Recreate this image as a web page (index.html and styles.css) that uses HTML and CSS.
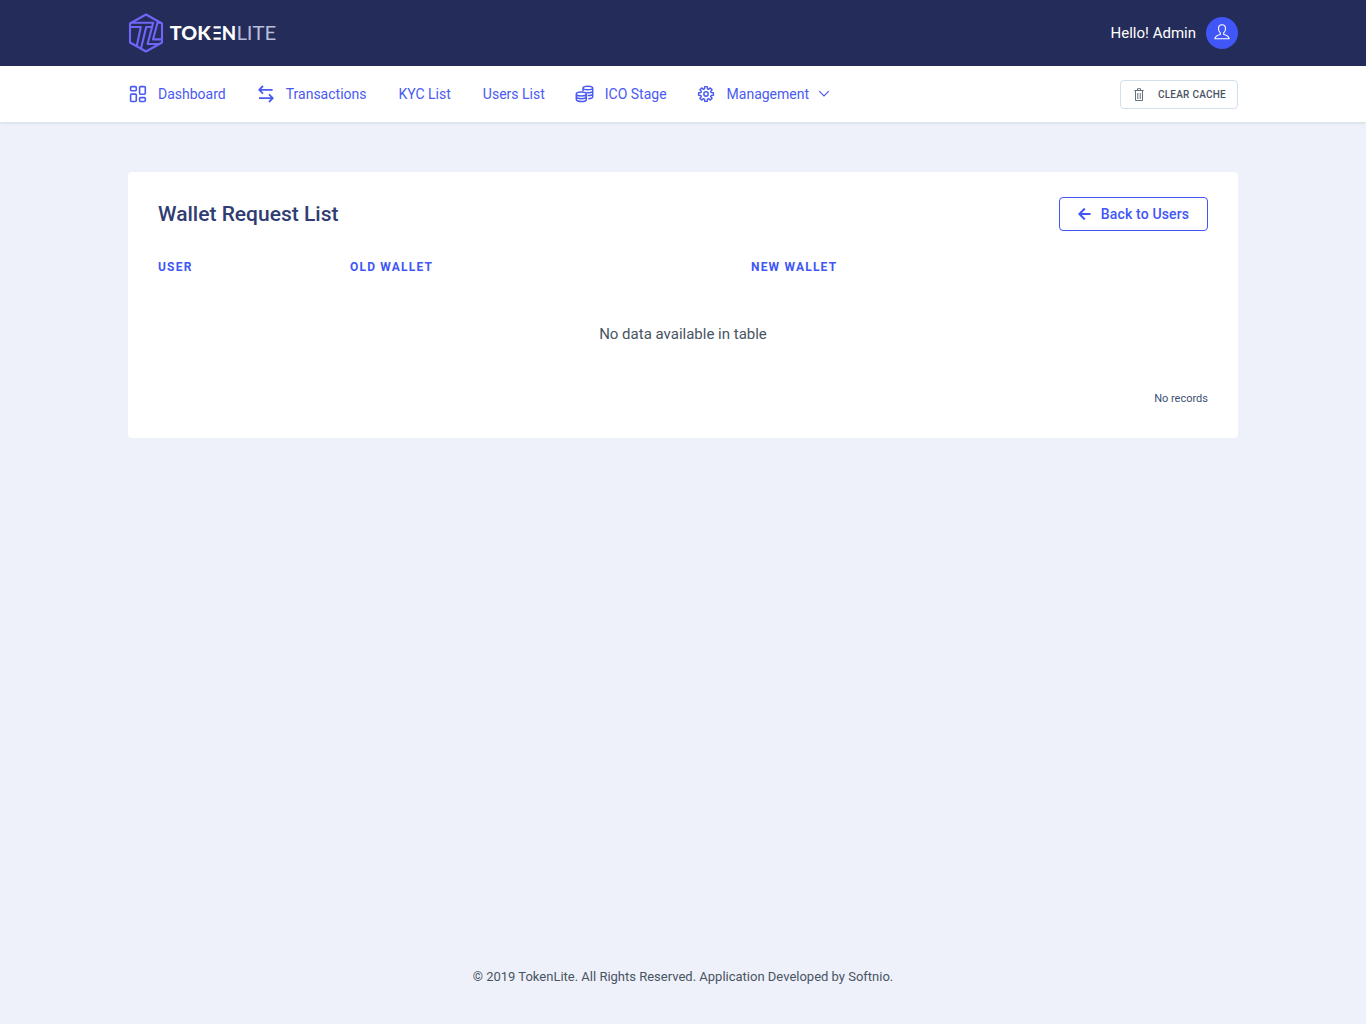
FILE: index.html
```
<!DOCTYPE html>
<html lang="en">
<head>
<meta charset="utf-8">
<title>Wallet Request List | TokenLite</title>
<link rel="stylesheet" href="styles.css">
</head>
<body>
<header class="topbar">
  <div class="container topbar-inner">
    <a class="logo" aria-label="TokenLite">
      <svg width="150" height="42" viewBox="0 0 150 42">
        <g fill="none" stroke="#7065f8" stroke-width="2.1" stroke-linejoin="round" stroke-linecap="round">
          <path d="M18 2.5 34 11.5V30.5L18 39.5 2 30.5V11.5Z"/>
          <path d="M3.5 10.8H25.2L24 15H18.2L13 36.5M3 15H12.8L8.8 33.8M32.5 10.8H29.5L25 27.4H33.2M25.2 10.8 19.6 32H31"/>
        </g>
        <g class="wordmark">
          <text class="bold" x="41.8" y="27.8" textLength="41" lengthAdjust="spacingAndGlyphs">TOK</text>
          <path d="M85.6 15.4h7.2M85.6 21h7.2M85.6 26.6h7.2" stroke="#fff" stroke-width="2.2"/>
          <text class="bold" x="93.8" y="27.8" textLength="14.4" lengthAdjust="spacingAndGlyphs">N</text>
          <text class="light" x="108.4" y="27.8" textLength="40" lengthAdjust="spacingAndGlyphs">LITE</text>
        </g>
      </svg>
    </a>
    <div class="user">
      <span>Hello! Admin</span>
      <span class="avatar">
        <svg width="16" height="16" viewBox="0 0 16 16" fill="none" stroke="#fff" stroke-width="1.1" stroke-linejoin="round"><path d="M6.3 8.7C4.7 7.5 4.4 5.7 4.5 4.3 4.6 1.8 6 .8 8 .8s3.4 1 3.5 3.5c.1 1.4-.2 3.2-1.8 4.4v1.8c2.7.6 5 1.4 5.4 4.2H.9c.4-2.8 2.7-3.6 5.4-4.2Z"/></svg>
      </span>
    </div>
  </div>
</header>
<nav class="navbar">
  <div class="container navbar-inner">
    <ul class="menu">
      <li><svg class="icon" viewBox="0 0 20 20"><rect x="2.6" y="2.6" width="5.7" height="4.1" rx="1"/><rect x="11.6" y="2.6" width="5.7" height="7.7" rx="1"/><rect x="2.6" y="10.1" width="5.7" height="7.4" rx="1"/><rect x="11.6" y="13.6" width="5.7" height="3.9" rx="1"/></svg>Dashboard</li>
      <li><svg class="icon arrows" viewBox="0 0 20 20"><path d="M16.6 5.8H3.5M7 2 3.2 5.8 7 9.6M3 14.2h13.5M13 10.4l3.8 3.8L13 18"/></svg>Transactions</li>
      <li>KYC List</li>
      <li>Users List</li>
      <li><svg class="icon coins" viewBox="0 0 20 20"><path d="M8 7.2V4c0-2.5 9.7-2.5 9.7 0v8.8c0 1-1.7 1.8-4.4 1.9M8 4c0 2.3 9.7 2.3 9.7 0M11.5 8.6c3 .4 6.2-.2 6.2-1.6M12.6 11.6c2.8.1 5.1-.5 5.1-1.7"/><path d="M1.3 10c0-2.6 10-2.6 10 0v5.4c0 2.8-10 2.8-10 0ZM1.3 10c0 2.5 10 2.5 10 0M1.3 12.8c0 2.5 10 2.5 10 0"/></svg>ICO Stage</li>
      <li><svg class="icon gear" viewBox="0 0 20 20"><path d="M8.35 4.3 8.6 1.8h2.8l.25 2.5 1.22.5 1.94-1.58 1.97 1.97-1.58 1.94.5 1.22 2.5.25v2.8l-2.5.25-.5 1.22 1.58 1.94-1.97 1.97-1.94-1.58-1.22.5-.25 2.5H8.6l-.25-2.5-1.22-.5-1.94 1.58-1.97-1.97 1.58-1.94-.5-1.22-2.5-.25V8.6l2.5-.25.5-1.22L3.22 5.19l1.97-1.97L7.13 4.8Z"/><circle cx="10" cy="10" r="2.4"/></svg>Management<svg class="caret" viewBox="0 0 12 8"><path d="M1.2 1.2 6 6l4.8-4.8"/></svg></li>
    </ul>
    <button class="btn-cache"><svg width="10" height="14" viewBox="0 0 10 14" fill="none" stroke="#657080"><path d="M.3 2.5h9.4M3.5 2V.7h3V2M1.5 3v9.5h7V3M3.8 5v6M6.2 5v6"/></svg>CLEAR CACHE</button>
  </div>
</nav>
<main class="container content">
  <section class="card">
    <div class="card-head">
      <h1>Wallet Request List</h1>
      <a class="btn-back"><svg width="13" height="12" viewBox="0 0 13 12"><path d="M12.5 6H1.8M6.8.6 1.4 6l5.4 5.4"/></svg>Back to Users</a>
    </div>
    <table>
      <thead><tr><th class="col-user">USER</th><th class="col-old">OLD WALLET</th><th>NEW WALLET</th></tr></thead>
      <tbody><tr><td colspan="3">No data available in table</td></tr></tbody>
    </table>
    <div class="records">No records</div>
  </section>
</main>
<footer class="footer">© 2019 TokenLite. All Rights Reserved. Application Developed by Softnio.</footer>
</body>
</html>
```

FILE: styles.css
```
* { box-sizing: border-box; }
body {
  margin: 0;
  min-height: 100vh;
  display: flex;
  flex-direction: column;
  background: #eef1f9;
  color: #495463;
  font-family: Roboto, sans-serif;
  font-size: 15px;
}
.container { width: 1110px; margin: 0 auto; }
.topbar { height: 66px; background: #242c59; color: #fff; }
.topbar-inner { height: 66px; display: flex; align-items: center; justify-content: space-between; }
.logo svg { display: block; }
.wordmark text { font-family: Lato, sans-serif; font-size: 19px; }
.wordmark .bold { font-weight: 900; fill: #fff; }
.wordmark .light { font-weight: 400; fill: #b9bedb; }
.user { display: flex; align-items: center; gap: 10px; }
.avatar {
  width: 32px;
  height: 32px;
  border-radius: 50%;
  background: #4156f6;
  display: flex;
  align-items: center;
  justify-content: center;
  padding-bottom: 2px;
}
.navbar { height: 56px; background: #fff; box-shadow: 0 1px 3px rgba(60, 80, 110, .15); }
.navbar-inner { height: 56px; display: flex; align-items: center; justify-content: space-between; }
.menu {
  list-style: none;
  margin: 0;
  padding: 0;
  display: flex;
  gap: 32px;
  color: #4a5af2;
  font-size: 14px;
}
.menu li { display: flex; align-items: center; height: 20px; }
.icon { width: 20px; height: 20px; margin-right: 10px; fill: none; stroke: currentColor; stroke-width: 1.6; stroke-linejoin: round; }
.arrows { stroke-width: 1.8; margin-left: -2px; }
.coins { stroke-width: 1.5; margin-left: -2px; }
.gear { width: 18px; height: 18px; margin: 0 11.5px 0 -1.5px; }
.caret { width: 12px; height: 8px; margin-left: 9px; fill: none; stroke: currentColor; stroke-width: 1.2; }
.btn-cache {
  height: 29px;
  width: 118px;
  margin-top: 1px;
  padding: 0 11px 0 13px;
  display: flex;
  align-items: center;
  justify-content: space-between;
  background: #fff;
  border: 1px solid #d3dfed;
  border-radius: 4px;
  font: 500 10px Roboto, sans-serif;
  letter-spacing: .25px;
  color: #495463;
}
.content { margin-top: 50px; }
.card { height: 266px; background: #fff; border-radius: 4px; padding: 25px 30px; }
.card-head { height: 34px; display: flex; align-items: center; justify-content: space-between; }
h1 { margin: 0; font-size: 21px; font-weight: 500; color: #303c72; }
.btn-back {
  width: 149px;
  height: 34px;
  display: flex;
  align-items: center;
  justify-content: center;
  gap: 10px;
  border: 1px solid #4156f6;
  border-radius: 4px;
  color: #4156f6;
  font-size: 14px;
  font-weight: 500;
  letter-spacing: .15px;
}
.btn-back path { fill: none; stroke: currentColor; stroke-width: 2.1; }
table { width: 100%; margin-top: 25px; border-collapse: collapse; table-layout: fixed; }
th {
  height: 22px;
  padding: 0;
  text-align: left;
  font-size: 12px;
  font-weight: 700;
  letter-spacing: 1.2px;
  color: #4156f6;
}
.col-user { width: 192px; }
.col-old { width: 401px; }
td { height: 112px; padding: 0; text-align: center; }
.records { margin-top: 2px; text-align: right; font-size: 11px; line-height: 14px; color: #3c5075; }
.footer { margin-top: auto; height: 56px; text-align: center; font-size: 13px; line-height: 18px; }
```
